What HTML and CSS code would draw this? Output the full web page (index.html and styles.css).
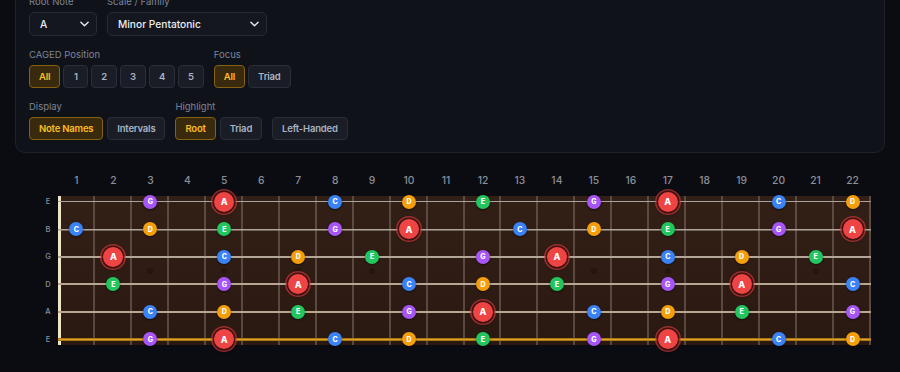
FILE: index.html
```html
<!DOCTYPE html>
<html lang="en">
<head>
<meta charset="utf-8">
<title>Fretboard</title>
<link rel="stylesheet" href="styles.css">
</head>
<body>
<div class="page">
  <div class="card controls">
    <div class="row">
      <div class="field">
        <div class="label">Root Note</div>
        <div class="select select-root"><span>A</span><svg class="chev" viewBox="0 0 10 6" width="9" height="6"><path d="M1 1l4 4 4-4" fill="none" stroke="#e5e7eb" stroke-width="1.6" stroke-linecap="round" stroke-linejoin="round"/></svg></div>
      </div>
      <div class="field">
        <div class="label">Scale / Family</div>
        <div class="select select-scale"><span>Minor Pentatonic</span><svg class="chev" viewBox="0 0 10 6" width="9" height="6"><path d="M1 1l4 4 4-4" fill="none" stroke="#e5e7eb" stroke-width="1.6" stroke-linecap="round" stroke-linejoin="round"/></svg></div>
      </div>
    </div>
    <div class="row">
      <div class="field">
        <div class="label">CAGED Position</div>
        <div class="btns tight">
          <span class="btn on">All</span><span class="btn">1</span><span class="btn">2</span><span class="btn">3</span><span class="btn">4</span><span class="btn">5</span>
        </div>
      </div>
      <div class="field">
        <div class="label">Focus</div>
        <div class="btns tight">
          <span class="btn on">All</span><span class="btn">Triad</span>
        </div>
      </div>
    </div>
    <div class="row">
      <div class="field">
        <div class="label">Display</div>
        <div class="btns">
          <span class="btn on">Note Names</span><span class="btn">Intervals</span>
        </div>
      </div>
      <div class="field">
        <div class="label">Highlight</div>
        <div class="btns">
          <span class="btn on">Root</span><span class="btn">Triad</span>
        </div>
      </div>
      <div class="field">
        <span class="btn">Left-Handed</span>
      </div>
    </div>
  </div>

  <section class="fb">
    <div class="fb-head">
      <div></div>
      <div class="fret-nums">
        <span>1</span><span>2</span><span>3</span><span>4</span><span>5</span><span>6</span><span>7</span><span>8</span><span>9</span><span>10</span><span>11</span><span>12</span><span>13</span><span>14</span><span>15</span><span>16</span><span>17</span><span>18</span><span>19</span><span>20</span><span>21</span><span>22</span>
      </div>
    </div>
    <div class="fb-body">
      <div class="str-labels">
        <span>E</span><span>B</span><span>G</span><span>D</span><span>A</span><span>E</span>
      </div>
      <div class="board">
        <div class="string s1">
          <span class="dot g" style="grid-column:3">G</span>
          <span class="dot root" style="grid-column:5">A</span>
          <span class="dot c" style="grid-column:8">C</span>
          <span class="dot d" style="grid-column:10">D</span>
          <span class="dot e" style="grid-column:12">E</span>
          <span class="dot g" style="grid-column:15">G</span>
          <span class="dot root" style="grid-column:17">A</span>
          <span class="dot c" style="grid-column:20">C</span>
          <span class="dot d" style="grid-column:22">D</span>
        </div>
        <div class="string s2">
          <span class="dot c" style="grid-column:1">C</span>
          <span class="dot d" style="grid-column:3">D</span>
          <span class="dot e" style="grid-column:5">E</span>
          <span class="dot g" style="grid-column:8">G</span>
          <span class="dot root" style="grid-column:10">A</span>
          <span class="dot c" style="grid-column:13">C</span>
          <span class="dot d" style="grid-column:15">D</span>
          <span class="dot e" style="grid-column:17">E</span>
          <span class="dot g" style="grid-column:20">G</span>
          <span class="dot root" style="grid-column:22">A</span>
        </div>
        <div class="string s3">
          <span class="dot root" style="grid-column:2">A</span>
          <span class="dot c" style="grid-column:5">C</span>
          <span class="dot d" style="grid-column:7">D</span>
          <span class="dot e" style="grid-column:9">E</span>
          <span class="dot g" style="grid-column:12">G</span>
          <span class="dot root" style="grid-column:14">A</span>
          <span class="dot c" style="grid-column:17">C</span>
          <span class="dot d" style="grid-column:19">D</span>
          <span class="dot e" style="grid-column:21">E</span>
        </div>
        <div class="inlays">
          <span class="inlay" style="grid-column:3"></span>
          <span class="inlay" style="grid-column:5"></span>
          <span class="inlay" style="grid-column:7"></span>
          <span class="inlay" style="grid-column:9"></span>
          <span class="inlay" style="grid-column:15"></span>
          <span class="inlay" style="grid-column:17"></span>
          <span class="inlay" style="grid-column:19"></span>
          <span class="inlay" style="grid-column:21"></span>
        </div>
        <div class="string s4">
          <span class="dot e" style="grid-column:2">E</span>
          <span class="dot g" style="grid-column:5">G</span>
          <span class="dot root" style="grid-column:7">A</span>
          <span class="dot c" style="grid-column:10">C</span>
          <span class="dot d" style="grid-column:12">D</span>
          <span class="dot e" style="grid-column:14">E</span>
          <span class="dot g" style="grid-column:17">G</span>
          <span class="dot root" style="grid-column:19">A</span>
          <span class="dot c" style="grid-column:22">C</span>
        </div>
        <div class="string s5">
          <span class="dot c" style="grid-column:3">C</span>
          <span class="dot d" style="grid-column:5">D</span>
          <span class="dot e" style="grid-column:7">E</span>
          <span class="dot g" style="grid-column:10">G</span>
          <span class="dot root" style="grid-column:12">A</span>
          <span class="dot c" style="grid-column:15">C</span>
          <span class="dot d" style="grid-column:17">D</span>
          <span class="dot e" style="grid-column:19">E</span>
          <span class="dot g" style="grid-column:22">G</span>
        </div>
        <div class="string s6">
          <span class="dot g" style="grid-column:3">G</span>
          <span class="dot root" style="grid-column:5">A</span>
          <span class="dot c" style="grid-column:8">C</span>
          <span class="dot d" style="grid-column:10">D</span>
          <span class="dot e" style="grid-column:12">E</span>
          <span class="dot g" style="grid-column:15">G</span>
          <span class="dot root" style="grid-column:17">A</span>
          <span class="dot c" style="grid-column:20">C</span>
          <span class="dot d" style="grid-column:22">D</span>
        </div>
      </div>
    </div>
  </section>

  <div class="card next"></div>
</div>
</body>
</html>
```

FILE: styles.css
```css
* { box-sizing: border-box; }

html, body {
  margin: 0;
  background: #0b0c12;
  font-family: Inter, "Noto Sans", "DejaVu Sans", sans-serif;
  color: #e5e7eb;
  overflow: hidden;
}

.page {
  padding: 0 15px;
}

.card {
  background: #10121a;
  border: 1px solid #1e212c;
  border-radius: 10px;
}

.controls {
  margin-top: -20px;
  padding: 14px 14px 12px 13px;
  display: flex;
  flex-direction: column;
  gap: 12px;
}

.row {
  display: flex;
  align-items: flex-end;
  gap: 10px;
}

.field {
  display: flex;
  flex-direction: column;
}

.label {
  font-size: 9.5px;
  line-height: 14px;
  color: #7b8597;
  margin-bottom: 3px;
}

.select {
  height: 24px;
  display: flex;
  align-items: center;
  justify-content: space-between;
  padding: 0 7px 0 10px;
  background: #141720;
  border: 1px solid #272b37;
  border-radius: 5px;
  font-size: 10.2px;
  font-weight: 500;
  color: #eceef2;
}

.select-root { width: 68px; }
.select-scale { width: 160px; }

.chev { display: block; }

.btns {
  display: flex;
  gap: 4px;
}

.btns.tight { gap: 3px; }

.btn {
  height: 23px;
  min-width: 25px;
  line-height: 21px;
  padding: 0 9px;
  border: 1px solid #2a2e39;
  background: #1a1d26;
  border-radius: 4px;
  font-size: 9.5px;
  font-weight: 600;
  letter-spacing: -0.2px;
  text-align: center;
  color: #aab3c2;
  white-space: nowrap;
}

.btn.on {
  background: #3a2a0d;
  border-color: #86610f;
  color: #fbbf24;
}

/* fretboard */
.fb {
  margin-top: 20px;
  padding-left: 25px;
}

.fb-head, .fb-body {
  display: grid;
  grid-template-columns: 16px 813px;
  column-gap: 2px;
}

.fret-nums {
  display: grid;
  grid-template-columns: repeat(22, 1fr);
  font-size: 10.3px;
  line-height: 14px;
  font-weight: 500;
  color: #8b909b;
  text-align: center;
  margin-bottom: 9px;
}

.str-labels {
  display: flex;
  flex-direction: column;
  height: 149px;
}

.str-labels span {
  flex-shrink: 0;
  height: 27.5px;
  line-height: 27.5px;
  text-align: center;
  font-size: 7.5px;
  font-weight: 500;
  color: #8a8f99;
}

.str-labels span:first-child { margin-top: -8px; }

.board {
  height: 149px;
  display: flex;
  flex-direction: column;
  background:
    repeating-linear-gradient(to right, transparent 0, transparent calc(100% / 22 - 2px), rgba(175, 160, 148, 0.34) calc(100% / 22 - 2px), rgba(175, 160, 148, 0.34) calc(100% / 22)),
    linear-gradient(180deg, #321f16 0%, #2e1c14 60%, #2a1911 100%);
  box-shadow: inset 3px 0 0 #efe6c9;
}

.string {
  flex-shrink: 0;
  height: 27.5px;
  display: grid;
  grid-template-columns: repeat(22, 1fr);
  grid-template-rows: 27.5px;
  align-items: center;
  justify-items: center;
  background: linear-gradient(var(--sc), var(--sc)) center / 100% var(--sw) no-repeat;
}

.string:first-child { margin-top: -8px; }

.s1 { --sc: #aba39d; --sw: 1px; }
.s2 { --sc: #b0a69d; --sw: 1.5px; }
.s3 { --sc: #b4a697; --sw: 2px; }
.s4 { --sc: #b7a692; --sw: 2px; }
.s5 { --sc: #bba78f; --sw: 2px; }
.s6 {
  background: linear-gradient(#8f620c, #dca125 50%, #8f620c) center / 100% 3px no-repeat;
}

.inlays {
  flex-shrink: 0;
  height: 0;
  display: grid;
  grid-template-columns: repeat(22, 1fr);
  grid-template-rows: 0px;
  justify-items: center;
}

.inlay {
  grid-row: 1;
  width: 6px;
  height: 6px;
  margin: -3px 0;
  border-radius: 50%;
  background: #24160f;
}

.dot {
  grid-row: 1;
  width: 14px;
  height: 14px;
  border-radius: 50%;
  display: flex;
  align-items: center;
  justify-content: center;
  font-size: 7px;
  font-weight: 800;
  color: #fff;
  box-shadow: 0 1px 2px rgba(0, 0, 0, 0.55);
}

.dot.c { background: #3b82f6; }
.dot.d { background: #f59e0b; }
.dot.e { background: #22c55e; }
.dot.g { background: #a855f7; }

.dot.root {
  width: 20px;
  height: 20px;
  font-size: 9px;
  background: #ef4444;
  box-shadow:
    0 0 0 1.5px rgba(25, 6, 6, 0.7),
    0 0 0 3px rgba(226, 64, 64, 0.6),
    0 2px 4px rgba(0, 0, 0, 0.5);
}

.next {
  margin-top: 27px;
  height: 40px;
}
```
